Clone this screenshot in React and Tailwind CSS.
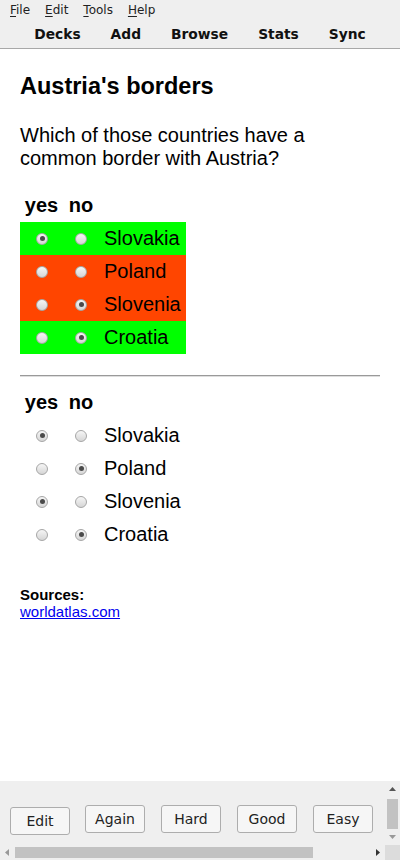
import React from "react";

const menus = ["File", "Edit", "Tools", "Help"];
const tabs = ["Decks", "Add", "Browse", "Stats", "Sync"];

const answered = [
  { name: "Slovakia", pick: "yes", ok: true },
  { name: "Poland", pick: null, ok: false },
  { name: "Slovenia", pick: "no", ok: false },
  { name: "Croatia", pick: "no", ok: true }
];

const correct = [
  { name: "Slovakia", pick: "yes" },
  { name: "Poland", pick: "no" },
  { name: "Slovenia", pick: "yes" },
  { name: "Croatia", pick: "no" }
];

const Radio = ({ checked }) => (
  <span className="w-[12px] h-[12px] rounded-full border border-[#a6a6a6] bg-linear-to-b from-[#f6f6f6] to-[#d6d6d6] flex items-center justify-center">
    {checked && <span className="w-[5px] h-[5px] rounded-full bg-[#4a4a4a]" />}
  </span>
);

const Header = () => (
  <div className="flex h-[30px] pt-[2px] font-bold text-[20px] leading-[23px]">
    <div className="w-[42px] text-center pl-[1px]">yes</div>
    <div className="w-[38px] text-center">no</div>
  </div>
);

const Row = ({ name, pick, bg }) => (
  <div className={`flex items-center h-[33px] w-[166px] ${bg || ""}`}>
    <div className="w-[42px] flex justify-center pl-[2px]">
      <Radio checked={pick === "yes"} />
    </div>
    <div className="w-[38px] flex justify-center">
      <Radio checked={pick === "no"} />
    </div>
    <div className="pl-[4px] text-[20px] leading-[23px]">{name}</div>
  </div>
);

const Btn = ({ label, extra }) => (
  <button className={`w-[60px] h-[28px] rounded-[3px] border border-[#adadad] bg-[#f6f6f6] text-[14px] text-[#222] ${extra || ""}`}>
    {label}
  </button>
);

export default function App() {
  return (
    <div className="w-[400px] h-[860px] flex flex-col bg-white overflow-hidden">
      {/* menu bar */}
      <div className="h-[20px] bg-[#efefef] flex items-center pl-[10px] gap-[15px] text-[12px] text-[#222] font-['DejaVu_Sans',sans-serif]">
        {menus.map(m => (
          <span key={m}>
            <span className="underline underline-offset-2">{m[0]}</span>
            {m.slice(1)}
          </span>
        ))}
      </div>

      {/* toolbar */}
      <div className="h-[29px] bg-[#efefef] border-b border-[#a8a8a8] flex items-center justify-center gap-[30px] font-bold text-[13.8px] text-[#111] font-['DejaVu_Sans',sans-serif]">
        {tabs.map(t => (
          <span key={t}>{t}</span>
        ))}
      </div>

      {/* card */}
      <div className="flex-1 px-[20px] pt-[23px] text-black font-['Liberation_Sans',Arial,sans-serif]">
        <h1 className="font-bold text-[23.5px] leading-[28px]">Austria's borders</h1>
        <p className="mt-[24px] text-[20px] leading-[23px]">
          Which of those countries have a common border with Austria?
        </p>

        <div className="mt-[22px]">
          <Header />
          {answered.map(r => (
            <Row key={r.name} name={r.name} pick={r.pick} bg={r.ok ? "bg-[#00ff00]" : "bg-[#ff4500]"} />
          ))}
        </div>

        <div className="mt-[21px] border-t border-b border-t-[#9a9a9a] border-b-[#dedede]" />

        <div className="mt-[12px]">
          <Header />
          {correct.map(r => (
            <Row key={r.name} name={r.name} pick={r.pick} />
          ))}
        </div>

        <div className="mt-[35px] text-[15px] leading-[17px]">
          <div className="font-bold">Sources:</div>
          <a href="#" className="text-[#0000ee] underline">worldatlas.com</a>
        </div>
      </div>

      {/* answer bar */}
      <div className="h-[79px] bg-[#efefef] flex flex-col font-['DejaVu_Sans',sans-serif]">
        <div className="flex-1 flex">
          <div className="flex-1 flex items-start pt-[24px] pl-[10px] gap-[16px]">
            <Btn label="Edit" extra="mt-[2px]" />
            <Btn label="Again" extra="ml-[-1px]" />
            <Btn label="Hard" />
            <Btn label="Good" />
            <Btn label="Easy" />
          </div>
          {/* vertical scrollbar */}
          <div className="w-[15px] flex flex-col items-center">
            <svg width="15" height="17" viewBox="0 0 15 17">
              <path d="M4 10 L7.5 6 L11 10 Z" fill="#555" />
            </svg>
            <div className="w-[11px] h-[30px] bg-[#c2c2c2] mt-[1px]" />
            <svg width="15" height="16" viewBox="0 0 15 16">
              <path d="M4 6 L7.5 10 L11 6 Z" fill="#999" />
            </svg>
          </div>
        </div>
        {/* horizontal scrollbar */}
        <div className="h-[15px] flex items-center">
          <svg width="15" height="15" viewBox="0 0 15 15">
            <path d="M9 4 L5 7.5 L9 11 Z" fill="#999" />
          </svg>
          <div className="w-[298px] h-[11px] bg-[#c2c2c2]" />
          <div className="flex-1" />
          <svg width="15" height="15" viewBox="0 0 15 15">
            <path d="M6 4 L10 7.5 L6 11 Z" fill="#333" />
          </svg>
          <div className="w-[15px] h-[15px] bg-[#dcdcdc]" />
        </div>
      </div>
    </div>
  );
}
